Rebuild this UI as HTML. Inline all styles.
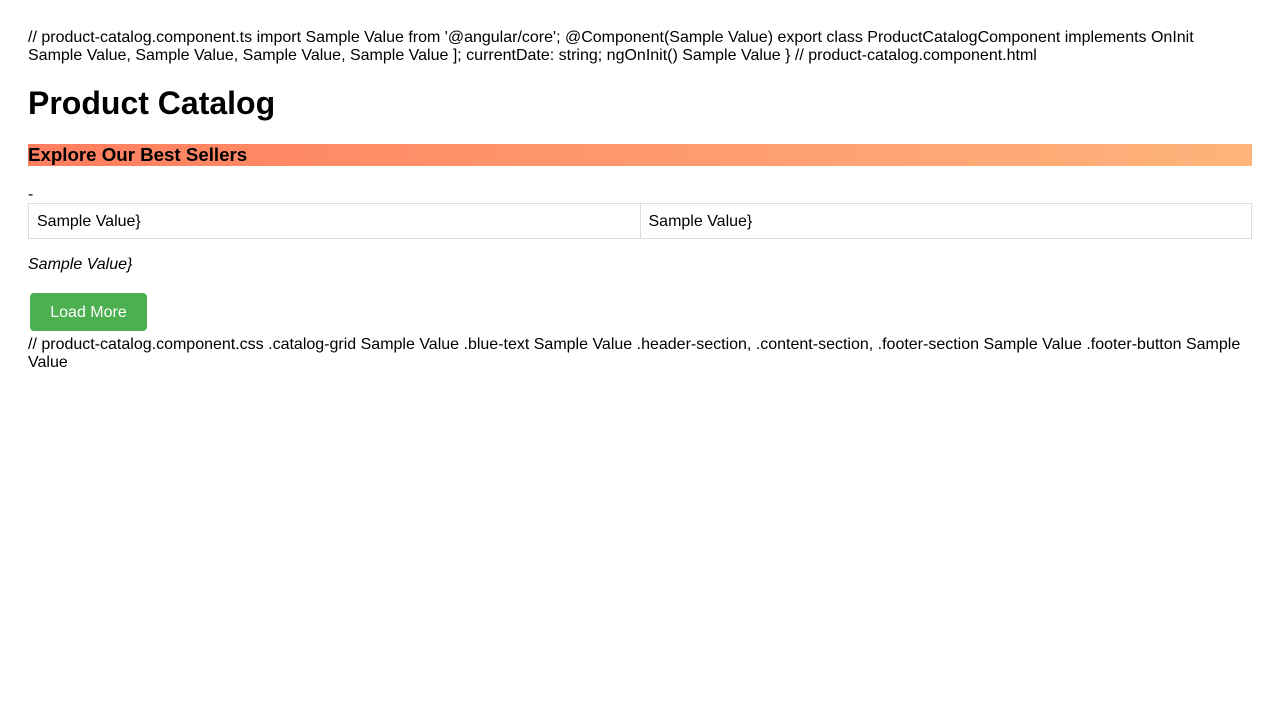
<!DOCTYPE html>
<html><head><style>
body{margin:0;padding:20px 28px;font-family:"Liberation Sans",sans-serif;font-size:16px;color:#000;background:#fff}
p{margin:0}
.t{position:absolute;left:28px;width:1224px;line-height:18px;padding-top:1px}
h1{position:absolute;left:28px;top:85px;margin:0;font-size:32px;line-height:37px;font-weight:bold}
.bar{position:absolute;left:28px;top:144px;width:1224px;height:22px;background:linear-gradient(90deg,#ff7e5f,#feb47b);font-weight:bold;font-size:18.7px;line-height:22px}
table{position:absolute;left:28px;top:203px;width:1224px;border-collapse:collapse}
td{border:1px solid #ddd;padding:9px 8px 7px;height:18px;line-height:18px;width:50%}
.btn{position:absolute;left:30px;top:293px;width:117px;height:37px;padding-top:1px;background:#4caf50;color:#fff;border-radius:4px;text-align:center;line-height:38px}
</style></head><body>
<div class="t" style="top:28px">// product-catalog.component.ts import Sample Value from '@angular/core'; @Component(Sample Value) export class ProductCatalogComponent implements OnInit Sample Value, Sample Value, Sample Value, Sample Value ]; currentDate: string; ngOnInit() Sample Value } // product-catalog.component.html</div>
<h1>Product Catalog</h1>
<div class="bar">Explore Our Best Sellers</div>
<div class="t" style="top:185px">-</div>
<table><tr><td>Sample Value}</td><td>Sample Value}</td></tr></table>
<div class="t" style="top:255px;font-style:italic">Sample Value}</div>
<div class="btn">Load More</div>
<div class="t" style="top:335px">// product-catalog.component.css .catalog-grid Sample Value .blue-text Sample Value .header-section, .content-section, .footer-section Sample Value .footer-button Sample Value</div>
</body></html>
